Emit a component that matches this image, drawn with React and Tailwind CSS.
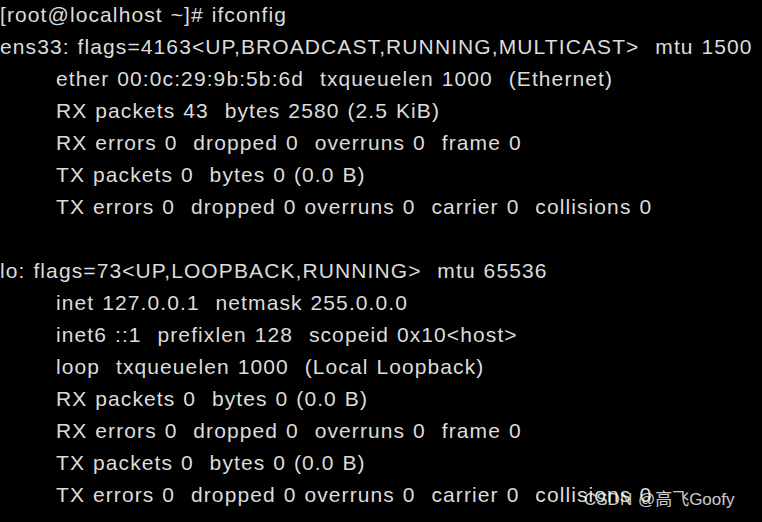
const lines = [
  { t: "[root@localhost ~]# ifconfig", i: false },
  { t: "ens33: flags=4163<UP,BROADCAST,RUNNING,MULTICAST>  mtu 1500", i: false },
  { t: "ether 00:0c:29:9b:5b:6d  txqueuelen 1000  (Ethernet)", i: true },
  { t: "RX packets 43  bytes 2580 (2.5 KiB)", i: true },
  { t: "RX errors 0  dropped 0  overruns 0  frame 0", i: true },
  { t: "TX packets 0  bytes 0 (0.0 B)", i: true },
  { t: "TX errors 0  dropped 0 overruns 0  carrier 0  collisions 0", i: true },
  { t: "", i: false },
  { t: "lo: flags=73<UP,LOOPBACK,RUNNING>  mtu 65536", i: false },
  { t: "inet 127.0.0.1  netmask 255.0.0.0", i: true },
  { t: "inet6 ::1  prefixlen 128  scopeid 0x10<host>", i: true },
  { t: "loop  txqueuelen 1000  (Local Loopback)", i: true },
  { t: "RX packets 0  bytes 0 (0.0 B)", i: true },
  { t: "RX errors 0  dropped 0  overruns 0  frame 0", i: true },
  { t: "TX packets 0  bytes 0 (0.0 B)", i: true },
  { t: "TX errors 0  dropped 0 overruns 0  carrier 0  collisions 0", i: true },
];

export default function App() {
  return (
    <div className="relative w-[762px] h-[522px] overflow-hidden bg-black text-[#dcdcdc] font-['Liberation_Sans',sans-serif] text-[21px] leading-[32px] tracking-[1.1px] [word-spacing:1px]">
      <div className="-mt-[1px]">
        {lines.map((l, k) => (
          <div key={k} className={`h-[32px] whitespace-pre ${l.i ? "pl-[56px]" : ""}`}>
            {l.t}
          </div>
        ))}
      </div>
      {/* watermark */}
      <div className="absolute left-[584px] top-[488px] text-[17px] leading-[24px] tracking-normal text-white/80 font-['Liberation_Sans','Noto_Sans_CJK_SC',sans-serif] whitespace-pre">
        CSDN @高飞Goofy
      </div>
    </div>
  );
}
